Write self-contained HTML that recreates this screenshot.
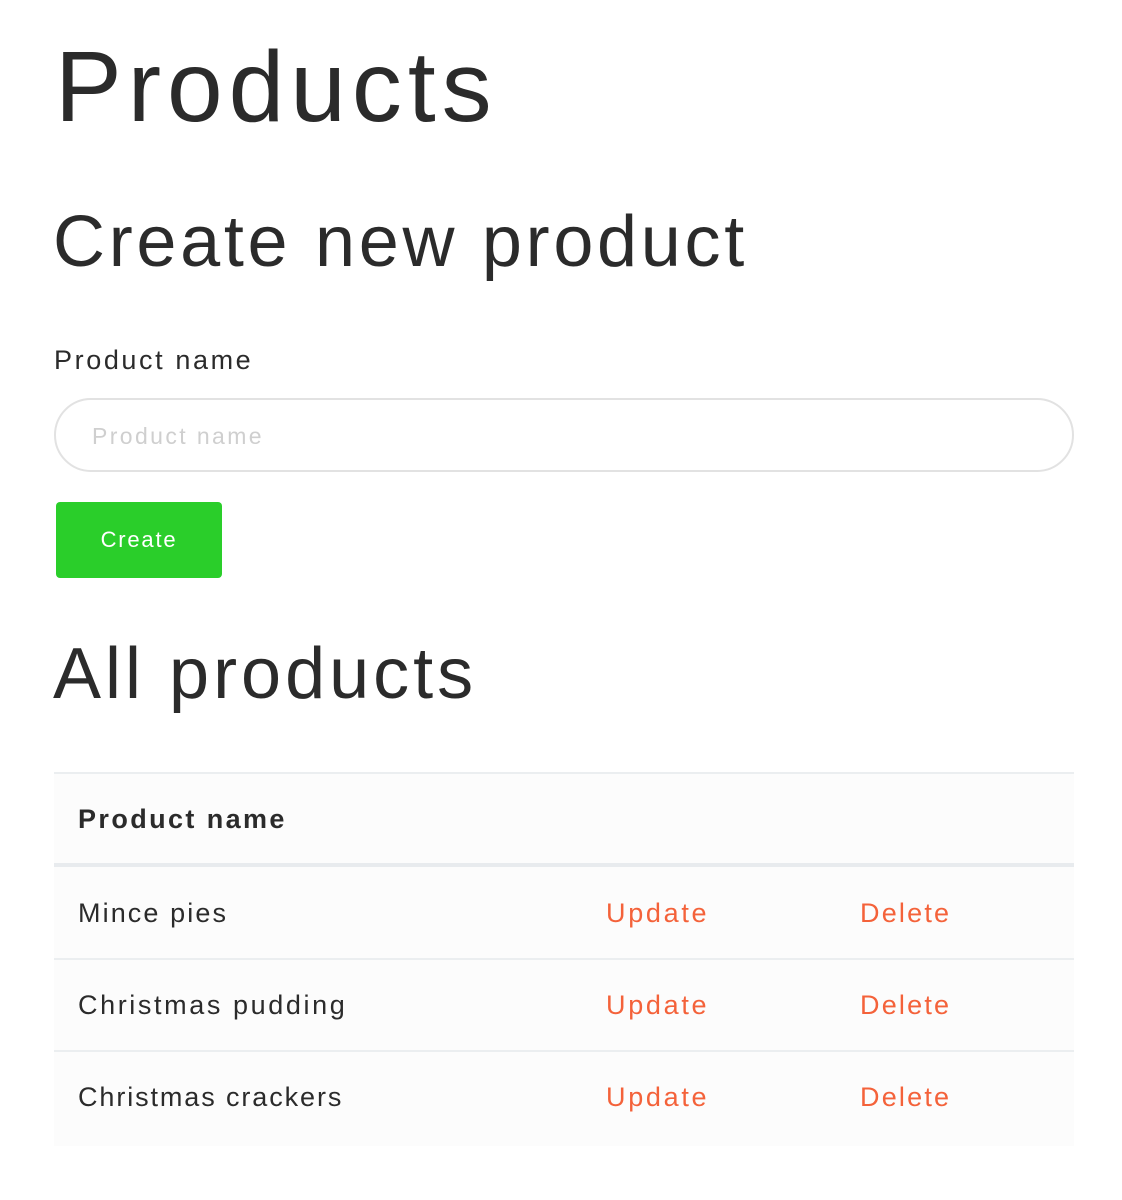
<!DOCTYPE html>
<html><head><style>
body{margin:0;background:#fff;font-family:"Liberation Sans",sans-serif;color:#2b2b2b;width:1122px;height:1200px;position:relative;overflow:hidden}
.a{position:absolute;white-space:nowrap}
.o{color:#f4623a}
</style></head><body>
<div class="a" style="left:55px;top:30px;font-size:100px;line-height:114px;letter-spacing:6px">Products</div>
<div class="a" style="left:53px;top:200px;font-size:72px;line-height:84px;letter-spacing:3.7px">Create new product</div>
<div class="a" style="left:54px;top:343px;font-size:27px;line-height:34px;letter-spacing:2.6px">Product name</div>
<div class="a" style="left:54px;top:398px;width:1016px;height:70px;border:2px solid #e2e2e2;border-radius:37px"></div>
<div class="a" style="left:92px;top:421px;font-size:23px;line-height:30px;color:#cfcfcf;letter-spacing:2.4px">Product name</div>
<div class="a" style="left:56px;top:502px;width:166px;height:76px;background:#2ace2a;border-radius:4px;color:#fff;font-size:22px;line-height:76px;text-align:center;letter-spacing:1.8px">Create</div>
<div class="a" style="left:53px;top:632px;font-size:72px;line-height:84px;letter-spacing:4px">All products</div>
<div class="a" style="left:54px;top:772px;width:1020px;height:372px;background:#fcfcfc;border-top:2px solid #ebeef0"></div>
<div class="a" style="left:54px;top:863px;width:1020px;height:4px;background:#e8ebee"></div>
<div class="a" style="left:54px;top:958px;width:1020px;height:2px;background:#ebeef0"></div>
<div class="a" style="left:54px;top:1050px;width:1020px;height:2px;background:#ebeef0"></div>
<div class="a" style="left:78px;top:802px;font-size:27px;line-height:34px;font-weight:bold;letter-spacing:2.4px">Product name</div>
<div class="a" style="left:78px;top:896px;font-size:27px;line-height:34px;letter-spacing:2.1px">Mince pies</div>
<div class="a o" style="left:606px;top:896px;font-size:27px;line-height:34px;letter-spacing:2.7px">Update</div>
<div class="a o" style="left:860px;top:896px;font-size:27px;line-height:34px;letter-spacing:2.2px">Delete</div>
<div class="a" style="left:78px;top:988px;font-size:27px;line-height:34px;letter-spacing:2.6px">Christmas pudding</div>
<div class="a o" style="left:606px;top:988px;font-size:27px;line-height:34px;letter-spacing:2.7px">Update</div>
<div class="a o" style="left:860px;top:988px;font-size:27px;line-height:34px;letter-spacing:2.2px">Delete</div>
<div class="a" style="left:78px;top:1080px;font-size:27px;line-height:34px;letter-spacing:1.9px">Christmas crackers</div>
<div class="a o" style="left:606px;top:1080px;font-size:27px;line-height:34px;letter-spacing:2.7px">Update</div>
<div class="a o" style="left:860px;top:1080px;font-size:27px;line-height:34px;letter-spacing:2.2px">Delete</div>
</body></html>
